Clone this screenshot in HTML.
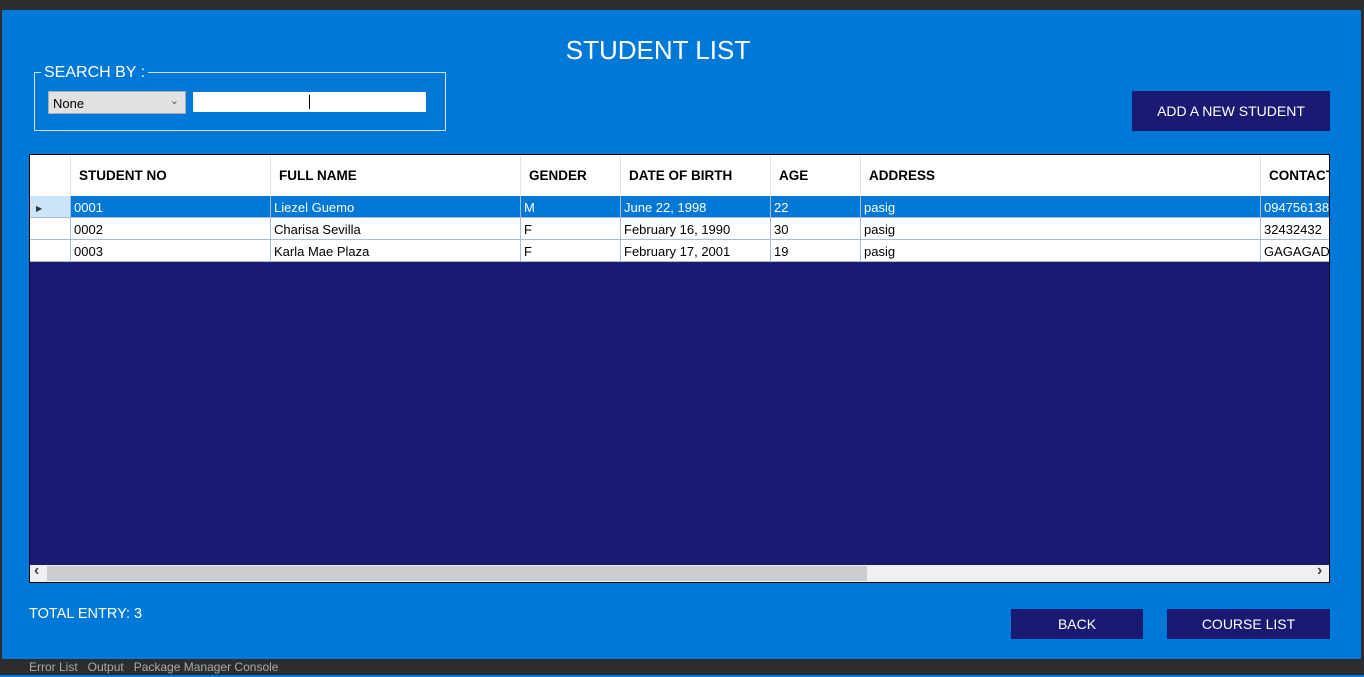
<!DOCTYPE html>
<html><head><style>
*{margin:0;padding:0;box-sizing:border-box}
body{width:1364px;height:677px;background:#2d2d30;position:relative;overflow:hidden;font-family:"Liberation Sans",sans-serif}
.a{position:absolute}
#win{left:2px;top:10px;width:1359px;height:649px;background:#0078d7}
.t{color:#fff}
.btn{background:#1b1a72;color:#fff;font-size:14px;text-align:center;position:absolute}
.hd{position:absolute;top:0;height:41px;border-right:1px solid #e3e3e3;font-weight:bold;font-size:13.5px;color:#000;padding:13px 0 0 8px;white-space:nowrap;overflow:hidden}
.c{position:absolute;height:22px;border-right:1px solid #a9bcd3;border-bottom:1px solid #a9bcd3;font-size:13px;padding:4px 0 0 3px;white-space:nowrap;overflow:hidden}
</style></head><body>
<div class="a" style="left:0;top:0;width:1364px;height:10px;background:#2d2d30"></div>
<div class="a" style="left:0;top:675px;width:1364px;height:2px;background:#0078d7"></div>
<div class="a" style="left:29px;top:660px;color:#aaa;font-size:12px">Error List &nbsp; Output &nbsp; Package Manager Console</div>
<div id="win" class="a"></div>
<div class="a t" style="left:0;width:1316px;top:35px;text-align:center;font-size:26px">STUDENT LIST</div>
<div class="a" style="left:34px;top:72px;width:412px;height:59px;border:1px solid #cfe3f5"></div>
<div class="a t" style="left:41px;top:64px;background:#0078d7;padding:0 3px;font-size:16px">SEARCH BY :</div>
<div class="a" style="left:48px;top:91px;width:138px;height:23px;background:#e1e1e1;border:1px solid #adadad;font-size:13px;padding:4px 0 0 4px">None<span style="position:absolute;right:6px;top:2px;font-size:11px;color:#555">&#8964;</span></div>
<div class="a" style="left:193px;top:92px;width:233px;height:20px;background:#fff"></div>
<div class="a" style="left:309px;top:95px;width:1px;height:14px;background:#000"></div>
<div class="btn" style="left:1132px;top:91px;width:198px;height:40px;line-height:40px">ADD A NEW STUDENT</div>
<div class="a" style="left:29px;top:154px;width:1301px;height:429px;background:#1b1a72;border:1px solid #000;overflow:hidden">
 <div class="a" style="left:0;top:0;width:1300px;height:41px;background:#fff"></div>
 <div class="hd" style="left:0;width:41px"></div>
 <div class="hd" style="left:41px;width:200px">STUDENT NO</div>
 <div class="hd" style="left:241px;width:250px">FULL NAME</div>
 <div class="hd" style="left:491px;width:100px">GENDER</div>
 <div class="hd" style="left:591px;width:150px">DATE OF BIRTH</div>
 <div class="hd" style="left:741px;width:90px">AGE</div>
 <div class="hd" style="left:831px;width:400px">ADDRESS</div>
 <div class="hd" style="left:1231px;width:80px">CONTACT</div>
 <div class="a" style="left:0;top:41px;width:1300px;height:66px;background:#fff"></div>
 <div class="a" style="left:0;top:41px;width:1300px;height:22px;background:#0078d7"></div>
 <div class="c" style="left:0;top:41px;width:41px;background:#cce4f7"><span style="font-size:8px;color:#333;position:relative;left:3px;top:-1px">&#9654;</span></div>
 <div class="c" style="left:0;top:63px;width:41px"></div>
 <div class="c" style="left:0;top:85px;width:41px"></div>
 <div class="c t" style="left:41px;top:41px;width:200px">0001</div>
 <div class="c t" style="left:241px;top:41px;width:250px">Liezel Guemo</div>
 <div class="c t" style="left:491px;top:41px;width:100px">M</div>
 <div class="c t" style="left:591px;top:41px;width:150px">June 22, 1998</div>
 <div class="c t" style="left:741px;top:41px;width:90px">22</div>
 <div class="c t" style="left:831px;top:41px;width:400px">pasig</div>
 <div class="c t" style="left:1231px;top:41px;width:80px">09475613884</div>
 <div class="c" style="left:41px;top:63px;width:200px">0002</div>
 <div class="c" style="left:241px;top:63px;width:250px">Charisa Sevilla</div>
 <div class="c" style="left:491px;top:63px;width:100px">F</div>
 <div class="c" style="left:591px;top:63px;width:150px">February 16, 1990</div>
 <div class="c" style="left:741px;top:63px;width:90px">30</div>
 <div class="c" style="left:831px;top:63px;width:400px">pasig</div>
 <div class="c" style="left:1231px;top:63px;width:80px">32432432</div>
 <div class="c" style="left:41px;top:85px;width:200px">0003</div>
 <div class="c" style="left:241px;top:85px;width:250px">Karla Mae Plaza</div>
 <div class="c" style="left:491px;top:85px;width:100px">F</div>
 <div class="c" style="left:591px;top:85px;width:150px">February 17, 2001</div>
 <div class="c" style="left:741px;top:85px;width:90px">19</div>
 <div class="c" style="left:831px;top:85px;width:400px">pasig</div>
 <div class="c" style="left:1231px;top:85px;width:80px">GAGAGADA</div>
 <div class="a" style="left:0;top:410px;width:1300px;height:17px;background:#f0f0f0"></div>
 <div class="a" style="left:17px;top:411px;width:820px;height:15px;background:#cdcdcd"></div>
 <div class="a" style="left:4px;top:407px;font-size:16px;color:#444;font-weight:bold">&lsaquo;</div>
 <div class="a" style="left:1287px;top:407px;font-size:16px;color:#444;font-weight:bold">&rsaquo;</div>
</div>
<div class="a t" style="left:29px;top:606px;font-size:14.5px">TOTAL ENTRY: 3</div>
<div class="btn" style="left:1011px;top:609px;width:132px;height:30px;line-height:30px">BACK</div>
<div class="btn" style="left:1167px;top:609px;width:163px;height:30px;line-height:30px">COURSE LIST</div>
</body></html>
